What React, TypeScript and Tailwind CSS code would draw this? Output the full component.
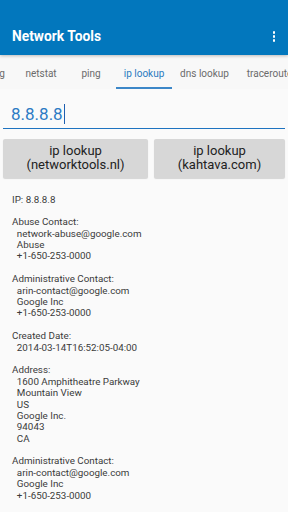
import React from "react";

const lines: string[] = [
  "IP: 8.8.8.8",
  "",
  "Abuse Contact:",
  "  network-abuse@google.com",
  "  Abuse",
  "  +1-650-253-0000",
  "",
  "Administrative Contact:",
  "  arin-contact@google.com",
  "  Google Inc",
  "  +1-650-253-0000",
  "",
  "Created Date:",
  "  2014-03-14T16:52:05-04:00",
  "",
  "Address:",
  "  1600 Amphitheatre Parkway",
  "  Mountain View",
  "  US",
  "  Google Inc.",
  "  94043",
  "  CA",
  "",
  "Administrative Contact:",
  "  arin-contact@google.com",
  "  Google Inc",
  "  +1-650-253-0000",
];

const tabs = [
  { label: "config", w: "w-[50px]" },
  { label: "netstat", w: "w-[50px]" },
  { label: "ping", w: "w-[50px]" },
  { label: "ip lookup", w: "w-[56px]", active: true },
  { label: "dns lookup", w: "w-[65px]" },
  { label: "traceroute", w: "w-[65px]" },
];

export default function App() {
  return (
    <div
      className="w-[288px] h-[512px] overflow-hidden bg-[#fafafa] flex flex-col"
      style={{ fontFamily: "Roboto, 'Noto Sans', sans-serif" }}
    >
      <div className="relative z-10 h-[55px] bg-[#0277bd] pt-[18px] flex items-center justify-between pl-[12px] pr-[13px] shadow-[0_1px_3px_rgba(0,0,0,0.25)]">
        <span className="text-white text-[13.8px] font-bold">Network Tools</span>
        <div className="flex flex-col gap-[1.5px] items-center">
          <span className="w-[2.5px] h-[2.5px] bg-white rounded-full" />
          <span className="w-[2.5px] h-[2.5px] bg-white rounded-full" />
          <span className="w-[2.5px] h-[2.5px] bg-white rounded-full" />
        </div>
      </div>
      <div className="h-[34px] bg-[#f8f8f8] flex overflow-hidden ml-[-34px]">
        {tabs.map((t) => (
          <div key={t.label} className={`${t.w} shrink-0 flex flex-col`}>
            <div
              className={`flex-1 pt-[5px] flex items-center justify-center text-[10px] whitespace-nowrap ${
                t.active ? "text-[#2a7bc0]" : "text-[#6b6b6b]"
              }`}
            >
              {t.label}
            </div>
            <div className={`h-[2px] ${t.active ? "bg-[#3c87c8]" : ""}`} />
          </div>
        ))}
      </div>
      <div className="mx-[3px] pt-[13px] pb-[2px] pl-[8px] border-b-[1.5px] border-[#1e73c0] flex items-center">
        <span className="text-[17px] leading-[24px] text-[#2d7bc4]">8.8.8.8</span>
        <span className="w-[1.5px] h-[20px] bg-[#1e5fb0] ml-[1px]" />
      </div>
      <div className="flex gap-[6px] mx-[3px] mt-[10px]">
        <div className="w-[145px] h-[38.5px] bg-[#d7d7d7] rounded-[2px] shadow-[0_1px_1px_rgba(0,0,0,0.15)] flex flex-col items-center justify-center text-[13px] leading-[14px] text-[#222]">
          <span>ip lookup</span>
          <span>(networktools.nl)</span>
        </div>
        <div className="w-[131px] h-[38.5px] bg-[#d7d7d7] rounded-[2px] shadow-[0_1px_1px_rgba(0,0,0,0.15)] flex flex-col items-center justify-center text-[13px] leading-[14px] text-[#222]">
          <span>ip lookup</span>
          <span>(kahtava.com)</span>
        </div>
      </div>
      <div className="pl-[12px] pt-[16px] text-[9.8px] text-[#3a3a3a] whitespace-pre">
        {lines.map((l, i) => (
          <div key={i} className="h-[11.4px] leading-[11.4px]">
            {l}
          </div>
        ))}
      </div>
    </div>
  );
}
